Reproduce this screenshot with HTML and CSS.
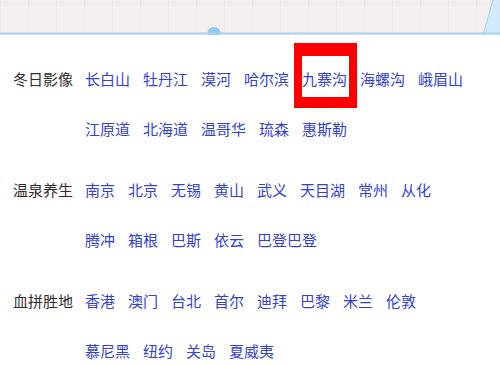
FILE: index.html
```html
<!DOCTYPE html>
<html lang="zh-CN">
<head>
<meta charset="utf-8">
<title>目的地</title>
<link rel="stylesheet" href="styles.css">
</head>
<body>
<div class="map">
  <svg class="map-svg" width="500" height="35" viewBox="0 0 500 35" xmlns="http://www.w3.org/2000/svg">
    <defs>
      <pattern id="grid" width="28" height="35" patternUnits="userSpaceOnUse">
        <line x1="0.5" y1="0" x2="0.5" y2="35" stroke="#f0e8e8" stroke-width="1"/>
      </pattern>
    </defs>
    <rect x="0" y="0" width="500" height="35" fill="#f4eeee"/>
    <rect x="0" y="0" width="500" height="33" fill="url(#grid)"/>
    <line x1="0" y1="2.5" x2="500" y2="2.5" stroke="#f1e9e9" stroke-width="1"/>
    <ellipse cx="214" cy="33" rx="6.5" ry="6" fill="#8fc7ee"/>
    <polygon points="483,35 493,0 500,0 500,35" fill="#d2eafb"/>
    <line x1="483" y1="35" x2="493" y2="0" stroke="#a3d0f0" stroke-width="1"/>
    <line x1="0" y1="33.5" x2="500" y2="33.5" stroke="#a9d4f1" stroke-width="2"/>
  </svg>
</div>
<main class="content">
  <section class="group">
    <div class="label">冬日影像</div>
    <div class="rows">
      <div class="row">
        <a class="link">长白山</a><a class="link">牡丹江</a><a class="link">漠河</a><a class="link">哈尔滨</a><a class="link">九寨沟</a><a class="link">海螺沟</a><a class="link">峨眉山</a>
      </div>
      <div class="row">
        <a class="link">江原道</a><a class="link">北海道</a><a class="link">温哥华</a><a class="link">琉森</a><a class="link">惠斯勒</a>
      </div>
    </div>
  </section>
  <section class="group">
    <div class="label">温泉养生</div>
    <div class="rows">
      <div class="row">
        <a class="link">南京</a><a class="link">北京</a><a class="link">无锡</a><a class="link">黄山</a><a class="link">武义</a><a class="link">天目湖</a><a class="link">常州</a><a class="link">从化</a>
      </div>
      <div class="row">
        <a class="link">腾冲</a><a class="link">箱根</a><a class="link">巴斯</a><a class="link">依云</a><a class="link">巴登巴登</a>
      </div>
    </div>
  </section>
  <section class="group">
    <div class="label">血拼胜地</div>
    <div class="rows">
      <div class="row">
        <a class="link">香港</a><a class="link">澳门</a><a class="link">台北</a><a class="link">首尔</a><a class="link">迪拜</a><a class="link">巴黎</a><a class="link">米兰</a><a class="link">伦敦</a>
      </div>
      <div class="row">
        <a class="link">慕尼黑</a><a class="link">纽约</a><a class="link">关岛</a><a class="link">夏威夷</a>
      </div>
    </div>
  </section>
  <div class="highlight"></div>
</main>
</body>
</html>
```

FILE: styles.css
```css
html, body {
  margin: 0;
  padding: 0;
  background: #ffffff;
}

body {
  width: 500px;
  height: 365px;
  overflow: hidden;
  font-family: "Noto Sans CJK SC", "Noto Sans", sans-serif;
  font-size: 15px;
}

.map {
  height: 35px;
}

.map-svg {
  display: block;
}

.content {
  position: relative;
  padding: 19px 0 0 13px;
  display: flex;
  flex-direction: column;
  gap: 11px;
}

.group {
  display: flex;
}

.label {
  flex: none;
  width: 72px;
  height: 50px;
  line-height: 50px;
  color: #352b2b;
}

.rows {
  display: flex;
  flex-direction: column;
}

.row {
  display: flex;
  gap: 13px;
  height: 50px;
  line-height: 50px;
  white-space: nowrap;
}

.link {
  color: #3343cf;
  text-decoration: none;
  cursor: pointer;
}

.highlight {
  position: absolute;
  left: 294px;
  top: 8px;
  width: 47px;
  height: 41px;
  border-style: solid;
  border-color: #ff0000;
  border-width: 13px 8px 11px 8px;
}
```
